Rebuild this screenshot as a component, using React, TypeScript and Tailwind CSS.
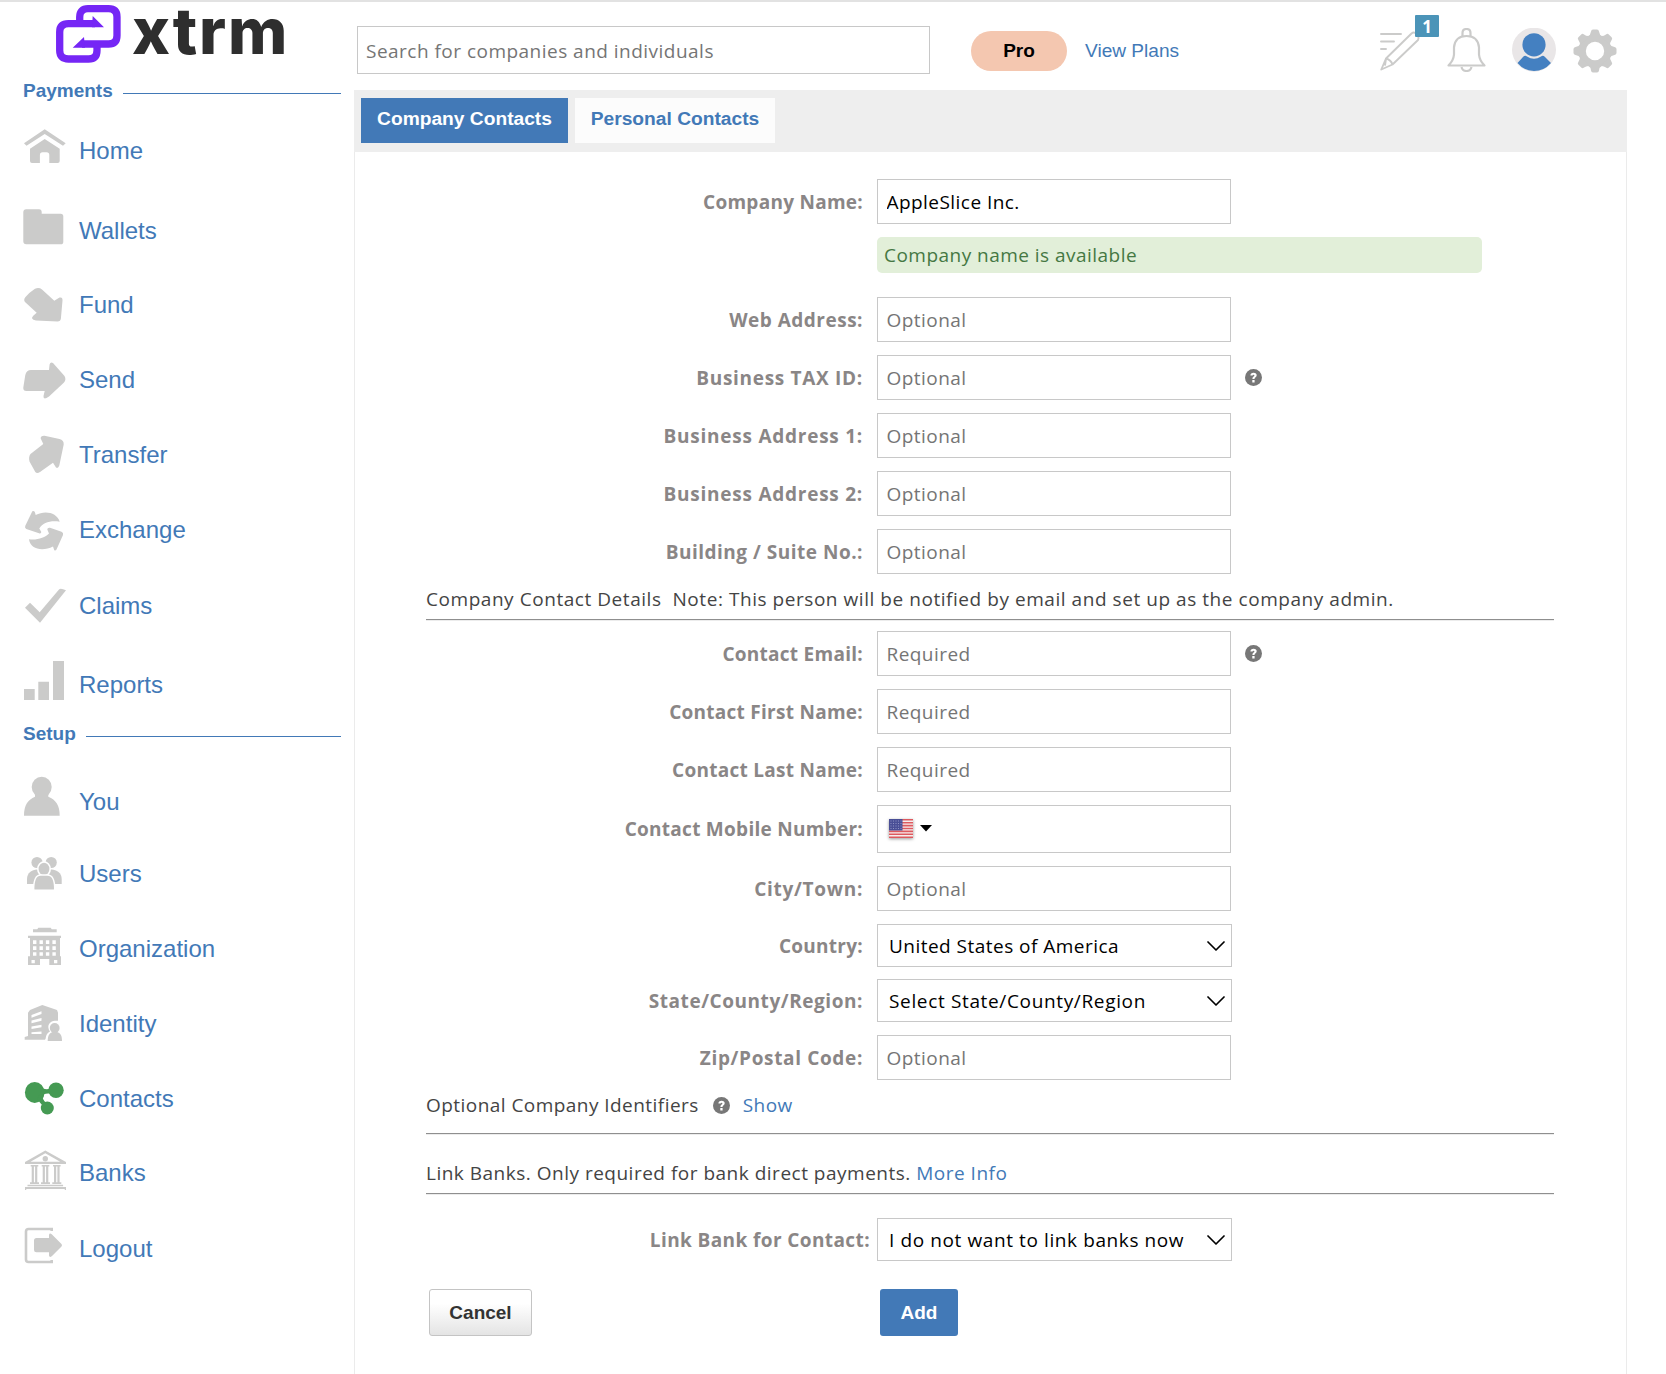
import type { ReactNode } from "react";

type NavItem = {
  label: string;
  gap: string;
  icon: ReactNode;
};

const paymentItems: NavItem[] = [
  {
    label: "Home",
    gap: "mt-0",
    icon: (
      <>
        <path d="M21.7.3 42.7 14.3 40 16.7 21.7 5 3.5 16.7 1 14.3z" />
        <path d="M21.7 10 36.7 19.7V32q0 2-2 2h-8.400v-8q0-2.700-2.700-2.700h-4q-2.700 0-2.700 2.700v8H9q-2 0-2-2V19.700z" />
      </>
    ),
  },
  {
    label: "Wallets",
    gap: "mt-[36px]",
    icon: <path d="M3.3.3H16q2.7 0 2.7 3v1.4h19q2.6 0 2.6 2.6v25.4q0 2.6-2.6 2.6H3.3q-3 0-3-3V3.3q0-3 3-3z" />,
  },
  {
    label: "Fund",
    gap: "mt-[30px]",
    icon: (
      <path d="M19 6.5 31.3 17.7 36.5 14.6Q39.7 13.7 39.5 17.5L37.9 35.5Q37.6 38.4 34.5 38.4L13 37.5Q6.5 36 10.5 32.5L13.7 29.7 2 19Q.3 17 2.3 14.3 6 9.5 12 5.7 16 4 19 6.5z" />
    ),
  },
  {
    label: "Send",
    gap: "mt-[31px]",
    icon: (
      <path d="M26 12 26.6 6.5Q27.5 3.5 30 5L41.5 18Q43.5 21.5 41 24.5L26 38.5Q20 42.5 20.5 38L21.7 33H3.5Q0 33 .3 29.5L2.3 17Q3.5 12 8 12z" />
    ),
  },
  {
    label: "Transfer",
    gap: "mt-[31px]",
    icon: (
      <path d="M20.3 11 17.7 5.5Q17.5 2.5 21.5 2.7L36.5 5.9Q41 7 40.7 11.5L36.3 32.5Q35 36 33 34.5L30 29.7 17 39Q14 41 12.3 39L6.5 28.5Q5.3 24 7.5 21z" />
    ),
  },
  {
    label: "Exchange",
    gap: "mt-[31px]",
    icon: (
      <>
        <path d="M9.3 3.3Q11.5 2.3 12 4.5L12.7 7C22 2 34 4.5 36.7 13.7 27 12.5 20 14.5 16.3 20.5L18.3 24Q18 26 16 25.2L3.3 21Q1.5 20 2.2 18z" />
        <path d="M6 31.3C14 32.5 22 29.5 26 25.5L24.3 21.5Q24.3 19.3 27 19.7L38.5 23.7Q40.7 24.5 40 27L33.5 41.5Q32.3 43.3 31.2 42L30 38.5C20 43.5 7 41.5 6 31.3z" />
      </>
    ),
  },
  {
    label: "Claims",
    gap: "mt-[32px]",
    icon: <path d="M2 23.7 7 18.7 16.7 28.3 36 5.5Q37.5 3.7 43 6.3L17 38.7z" />,
  },
  {
    label: "Reports",
    gap: "mt-[35px]",
    icon: <path d="M1 26h10.700v11H1zM15.300 18.700H26V37H15.300zM30-2h11v39H30z" />,
  },
];

const setupItems: NavItem[] = [
  {
    label: "You",
    gap: "mt-0",
    icon: (
      <>
        <ellipse cx="18.7" cy="7" rx="10" ry="10.2" />
        <path d="M12 14h13.3v2.7C33 20 36.7 25 36.7 35.7H1C1 25 5 19.5 12 16.7z" />
      </>
    ),
  },
  {
    label: "Users",
    gap: "mt-[28px]",
    icon: (
      <>
        <circle cx="14" cy="10.5" r="5.6" />
        <circle cx="28.2" cy="10.5" r="5.6" />
        <path d="M4 32v-5c0-6 5-9.5 10-9.5h14.5c5 0 10.2 3.5 10.2 9.5v5z" />
        <ellipse cx="21" cy="17" rx="6.2" ry="7" stroke="#fff" strokeWidth="1.6" />
        <path
          d="M10.700 37c0-9 2.500-14 7-14h6.800c4.500 0 7.200 5 7.200 14q0 1.300-1.300 1.300H12q-1.300 0-1.300-1.300z"
          stroke="#fff"
          strokeWidth="1.4"
        />
      </>
    ),
  },
  {
    label: "Organization",
    gap: "mt-[31px]",
    icon: (
      <>
        <path d="M15.3.7h12.4l1 1.6h5v3H10v-3h4.3zM5 8.7h33V11h-1v18.3h1V38H26.3v-6H17v6H5v-8.7h2V11H5z" />
        <path
          d="M10 13.300h3.400v3.800H10zm6.500 0h3.400v3.800h-3.400zm6.400 0h3.400v3.800h-3.400zm6.500 0h3.400v3.800h-3.400zM10 19.300h3.400V23H10zm6.500 0h3.400V23h-3.400zm6.400 0h3.400V23h-3.400zm6.500 0h3.400V23h-3.400zM10 25.200h3.400v3.500H10zm6.500 0h3.400v3.500h-3.400zm6.400 0h3.400v3.500h-3.400zm6.500 0h3.400v3.500h-3.400zM8.500 33h3.300v3.300H8.500zm22.500 0h3.300v3.300H31z"
          fill="#fff"
        />
      </>
    ),
  },
  {
    label: "Identity",
    gap: "mt-[31px]",
    icon: (
      <>
        <path d="M5 10.7 7 8 19.3 3 34 8l1 2.7v11L22 37.7H1.7V35L5 34z" />
        <path
          d="M8.5 13 18.5 9.3V12L8.5 15.7zM8.5 18.6l10-2.6v2.7l-10 2.5zM8.5 24.5l10-1.7v2.5l-10 1.6zM8.5 30.3l10-.8v2.6h-10z"
          fill="#fff"
        />
        <path d="M22.500 40c0-7 2-9.500 4.500-10.200-4.500-7 1-11 4.700-11h4V40z" fill="#fff" />
        <circle cx="31.7" cy="26" r="4.9" />
        <path d="M24.7 39c0-6 2-8 4.8-9h4.7c3 1 4.8 3 4.8 9z" />
      </>
    ),
  },
  {
    label: "Contacts",
    gap: "mt-[31px]",
    icon: (
      <g fill="#459a53">
        <ellipse cx="11.7" cy="15.4" rx="9.8" ry="10.5" />
        <circle cx="33" cy="13.2" r="7.7" />
        <circle cx="24.3" cy="31" r="6.5" />
        <path d="M20 11.5q4 1.5 7 0v5q-7-.5-7.5 2.5-.3 3 3.5 7l-4 2-5-6z" />
      </g>
    ),
  },
  {
    label: "Banks",
    gap: "mt-[30px]",
    icon: (
      <>
        <path d="M22.3-.5 43 11v2H2v-2zm0 2.8L7.5 10.7h29.7z" fillRule="evenodd" />
        <circle cx="22.3" cy="7.7" r="2.7" />
        <path d="M7.700 14h7.600v1.600H7.700zM8.700 15.600h2.200v15.600H8.700zm3.400 0h2.200v15.600h-2.200zM7 31.200h9v1.900H7zM18.700 14h7.600v1.600h-7.600zm1 1.600h2.200v15.600h-2.200zm3.400 0h2.200v15.600h-2.200zM18 31.200h9v1.900h-9zM30 14h7.600v1.600H30zm1 1.600h2.200v15.600H31zm3.400 0h2.200v15.600h-2.200zM29.300 31.200h9v1.900h-9zM4.500 33.700h35.600v1.600H4.500zM2 36h41v3h-1l-.5-1h-38L3 39H2z" />
      </>
    ),
  },
  {
    label: "Logout",
    gap: "mt-[32px]",
    icon: (
      <>
        <path
          d="M28.7 4V2H5.5Q3 2 3 4.5v28Q3 35 5.5 35h23.2v-2"
          fill="none"
          stroke="#cbcbca"
          strokeWidth="2.6"
        />
        <path d="M13.5 11H26V8q.5-2.5 3-.5L38.5 17q1 1.3 0 2.6L29 29q-2.500 2-3-.5v-3.200H13.500Q11 25.300 11 23v-9.500Q11 11 13.500 11z" />
      </>
    ),
  },
];

function NavList({ items }: { items: NavItem[] }) {
  return (
    <ul>
      {items.map((item) => (
        <li key={item.label} className={item.gap}>
          <a href="#" className="flex h-11 items-center text-2xl text-[#4279b7]">
            <svg viewBox="0 0 44 44" className="h-11 w-11 overflow-visible" fill="#cbcbca">
              {item.icon}
            </svg>
            <span className="ml-3">{item.label}</span>
          </a>
        </li>
      ))}
    </ul>
  );
}

function NavHeading({ children }: { children: ReactNode }) {
  return (
    <div className="flex items-center text-[19px] leading-6 font-bold text-[#4279b7]">
      {children}
      <span className="mt-[5px] ml-[10px] h-px flex-1 bg-[#4279b7]" />
    </div>
  );
}

function Logo() {
  return (
    <div className="flex h-[70px] items-start pl-[33px]">
      <svg viewBox="0 0 65 58" className="mt-[3px] h-[58px] w-[65px]" fill="none" stroke="#7526f5" strokeWidth="7.3">
        <path d="M23.700 16V12Q23.700 3.700 32 3.700H52.500Q61 3.700 61 12V30.500Q61 39 52.500 39H26" />
        <path d="M41 42V45.500Q41 54 32.500 54H12.500Q3.700 54 3.700 45.500V27Q3.700 18.700 12.500 18.700H39" />
        <path d="M36.700 11 48 22.300H36zM28 32 16.700 42.700H29z" fill="#7526f5" stroke="none" />
      </svg>
      <span className="ml-[11px] font-[Inter,sans-serif] text-[64px] leading-[58px] font-extrabold tracking-[1.900px] text-[#2e2e2e]">
        xtrm
      </span>
    </div>
  );
}

function Sidebar() {
  return (
    <aside className="w-[354px] shrink-0 pl-[23px]">
      <Logo />
      <div className="mt-[7px] w-[318px]">
        <NavHeading>Payments</NavHeading>
      </div>
      <nav className="mt-[26px]">
        <NavList items={paymentItems} />
      </nav>
      <div className="mt-[15px] w-[318px]">
        <NavHeading>Setup</NavHeading>
      </div>
      <nav className="mt-[34px]">
        <NavList items={setupItems} />
      </nav>
    </aside>
  );
}

function TopBar() {
  return (
    <header className="flex h-[88px] items-start pl-[3px]">
      <input
        placeholder="Search for companies and individuals"
        className="mt-[24px] h-[48px] w-[573px] border border-[#c8c8c8] px-2 pt-px font-['Open_Sans',sans-serif] text-[19px] tracking-[0.48px] placeholder:text-[#757575]"
      />
      <span className="mt-[29px] ml-[41px] flex h-10 w-24 items-center justify-center rounded-[20px] bg-[#f4c7b0] pt-px text-[19px] font-bold text-black">
        Pro
      </span>
      <a href="#" className="mt-[37px] ml-[18px] w-[95px] text-[19.1px] leading-6 whitespace-nowrap text-[#4279b7]">
        View Plans
      </a>
      <div className="relative mt-[30px] ml-[200px] h-10 w-10">
        <svg viewBox="0 0 40 40" className="h-10 w-10 overflow-visible" fill="none" stroke="#cbcbca" strokeWidth="1.9">
          <path d="M1 2h20M1 9.5h13M1 17h5" strokeLinecap="round" />
          <path d="M1.3 37.5 6 26.5 31.5 1.5Q34-.5 36.500 2 39.500 5 38 8L12.500 32.500zM6 26.500q5 1.500 6.500 6M6 26.500l-1 7" strokeLinejoin="round" />
        </svg>
        <span className="absolute -top-[17px] left-[35px] flex h-[22px] w-6 items-center justify-center rounded-[1px] bg-[#4b94b8] font-['Noto_Sans',sans-serif] text-[17px] leading-none font-bold text-white">
          1
        </span>
      </div>
      <svg viewBox="0 0 40 44" className="mt-[26px] ml-[27px] h-11 w-10" fill="none" stroke="#cbcbca" strokeWidth="2.2">
        <path d="M15.5 8V5q0-4 4-4t4 4v3M14.5 39q1 4 5 4t5-4" />
        <path d="M1.5 37.5q5-5 5.5-11v-7Q8 8 19.500 8T32 19.500v7q.5 6 5.500 11z" strokeLinejoin="round" />
      </svg>
      <svg viewBox="0 0 44 44" className="mt-[26px] ml-[25px] h-11 w-11">
        <circle cx="22" cy="21.7" r="22" fill="#e9e6e7" />
        <circle cx="22" cy="16.8" r="11.6" fill="#4480c1" />
        <path d="M5.5 35 11 29q2-2 4-.5 7 4.500 14 0 2-1.500 4 .5l6 6Q32 43 22 43T5.500 35z" fill="#4480c1" />
      </svg>
      <svg viewBox="-22 -22 44 44" className="mt-[27px] ml-[17px] h-11 w-11" fill="#cbcbca">
        <path
          fillRule="evenodd"
          d="M0-16.5A16.5 16.5 0 1 1 0 16.5 16.5 16.5 0 1 1 0-16.5zM0-9.2A9.2 9.2 0 1 0 0 9.2 9.2 9.2 0 1 0 0-9.2z"
        />
        {[0, 45, 90, 135, 180, 225, 270, 315].map((angle) => (
          <path
            key={angle}
            d="M-7-14.5Q-4.5-16-4-19.5-3.7-21.5-2-21.5H2Q3.7-21.5 4-19.5 4.5-16 7-14.5z"
            transform={`rotate(${angle})`}
          />
        ))}
      </svg>
    </header>
  );
}

function Help({ className = "" }: { className?: string }) {
  return (
    <svg viewBox="0 0 17 17" className={`h-[17px] w-[17px] ${className}`}>
      <circle cx="8.5" cy="8.5" r="8.5" fill="#777" />
      <path
        d="M5.4 6.5Q5.5 3.7 8.6 3.7T11.7 6.3Q11.7 7.6 10.3 8.4 9.5 9 9.5 10H7.4Q7.3 8.3 8.6 7.5 9.4 7 9.4 6.4 9.4 5.7 8.6 5.7T7.6 6.5zM7.3 11.1h2.3v2.3H7.3z"
        fill="#fff"
      />
    </svg>
  );
}

type RowProps = {
  label: string;
  tracking?: string;
  className?: string;
  wide?: boolean;
  help?: boolean;
  children: ReactNode;
};

function Row({ label, tracking = "tracking-[0.27px]", className = "mt-[13px]", wide, help, children }: RowProps) {
  return (
    <div className={`flex items-center ${className}`}>
      <span
        className={`shrink-0 text-right font-bold text-[#8a8686] ${tracking} ${wide ? "mr-[7px] w-[515px]" : "mr-[14px] w-[508px]"}`}
      >
        {label}
      </span>
      {children}
      {help && <Help className="ml-[14px]" />}
    </div>
  );
}

function TextBox({ placeholder, value }: { placeholder?: string; value?: string }) {
  return (
    <input
      placeholder={placeholder}
      defaultValue={value}
      className="h-[45px] w-[354px] border border-[#c8c8c8] px-[8.5px] tracking-[0.45px] text-black placeholder:text-[#757575]"
    />
  );
}

function SelectBox({ value, tracking }: { value: string; tracking: string }) {
  return (
    <button
      className={`flex h-[43px] w-[355px] items-center justify-between border border-[#c8c8c8] pr-[6px] pl-[11px] text-black ${tracking}`}
    >
      {value}
      <svg viewBox="0 0 18 10" className="h-[10px] w-[18px]" fill="none" stroke="#000" strokeWidth="1.7">
        <path d="M1 1 9 9 17 1" strokeLinecap="round" strokeLinejoin="round" />
      </svg>
    </button>
  );
}

function Flag() {
  return (
    <svg viewBox="0 0 24 19" className="h-[19px] w-6 shadow-[0_1px_3px_rgba(0,0,0,0.4)]">
      <rect width="24" height="19" fill="#f6eeee" />
      <path
        d="M0 .8h24M0 3.7h24M0 6.6h24M0 9.5h24M0 12.4h24M0 15.3h24M0 18.2h24"
        stroke="#dd5a5f"
        strokeWidth="1.6"
      />
      <rect width="13.5" height="11.5" fill="#4a4f96" />
      <path
        d="M1.5 2h11M1.5 4.5h11M1.5 7h11M1.5 9.5h11"
        stroke="#8f93c4"
        strokeWidth="1"
        strokeDasharray="1 1.5"
      />
    </svg>
  );
}

function Rule({ className }: { className: string }) {
  return <hr className={`ml-[71px] h-[2px] w-[1128px] border-0 border-t border-[#8f8f8f] bg-[#ececec] ${className}`} />;
}

function ContactForm() {
  return (
    <form className="h-[1222px] border-x border-[#ebebeb] pt-[27px] font-['Open_Sans',sans-serif] text-[19px] leading-6 text-[#444]">
      <Row label="Company Name:" className="mt-0">
        <TextBox value="AppleSlice Inc." />
      </Row>
      <p className="mt-[13px] ml-[522px] h-9 w-[605px] rounded-[5px] bg-[#e2efd9] pl-[7px] leading-9 tracking-[0.47px] text-[#457843]">
        Company name is available
      </p>
      <Row label="Web Address:" tracking="tracking-[0.5px]" className="mt-[24px]">
        <TextBox placeholder="Optional" />
      </Row>
      <Row label="Business TAX ID:" tracking="tracking-[0.7px]" help>
        <TextBox placeholder="Optional" />
      </Row>
      <Row label="Business Address 1:" tracking="tracking-[0.75px]">
        <TextBox placeholder="Optional" />
      </Row>
      <Row label="Business Address 2:" tracking="tracking-[0.75px]">
        <TextBox placeholder="Optional" />
      </Row>
      <Row label="Building / Suite No.:" tracking="tracking-[0.5px]">
        <TextBox placeholder="Optional" />
      </Row>
      <p className="mt-[13px] ml-[71px] whitespace-pre tracking-[0.55px]">
        {"Company Contact Details  Note: This person will be notified by email and set up as the company admin."}
      </p>
      <Rule className="mt-[8px]" />
      <Row label="Contact Email:" className="mt-[10px]" help>
        <TextBox placeholder="Required" />
      </Row>
      <Row label="Contact First Name:">
        <TextBox placeholder="Required" />
      </Row>
      <Row label="Contact Last Name:">
        <TextBox placeholder="Required" />
      </Row>
      <Row label="Contact Mobile Number:">
        <div className="flex h-[48px] w-[354px] items-center border border-[#c8c8c8] pb-[2px] pl-[11px]">
          <Flag />
          <svg viewBox="0 0 12 7" className="ml-[7px] h-[7px] w-3">
            <path d="M0 0h12L6 6.5z" />
          </svg>
        </div>
      </Row>
      <Row label="City/Town:" tracking="tracking-[0.7px]">
        <TextBox placeholder="Optional" />
      </Row>
      <Row label="Country:">
        <SelectBox value="United States of America" tracking="tracking-[0.47px]" />
      </Row>
      <Row label="State/County/Region:" tracking="tracking-[0.55px]" className="mt-[12px]">
        <SelectBox value="Select State/County/Region" tracking="tracking-[0.65px]" />
      </Row>
      <Row label="Zip/Postal Code:" tracking="tracking-[0.65px]">
        <TextBox placeholder="Optional" />
      </Row>
      <p className="mt-[13px] ml-[71px] flex items-center tracking-[0.45px]">
        Optional Company Identifiers
        <Help className="ml-[14px]" />
        <a href="#" className="ml-[13px] text-[#4279b7]">
          Show
        </a>
      </p>
      <Rule className="mt-[16px]" />
      <p className="mt-[26px] ml-[71px] tracking-[0.5px]">
        Link Banks. Only required for bank direct payments.{" "}
        <a href="#" className="text-[#4279b7]">
          More Info
        </a>
      </p>
      <Rule className="mt-[8px]" />
      <Row label="Link Bank for Contact:" tracking="tracking-[0.4px]" className="mt-[23px]" wide>
        <SelectBox value="I do not want to link banks now" tracking="tracking-[0.6px]" />
      </Row>
      <div className="mt-[28px] flex pl-[74px] font-['Liberation_Sans',sans-serif] font-bold [text-shadow:0_1px_1px_rgba(0,0,0,0.3)]">
        <button className="h-[47px] w-[103px] rounded-[3px] border border-[#c4c4c4] bg-linear-to-b from-white from-30% to-[#e4e4e4] text-[#333]">
          Cancel
        </button>
        <button className="ml-[348px] h-[47px] w-[78px] rounded-[3px] bg-[#4279b7] text-white">Add</button>
      </div>
    </form>
  );
}

export default function App() {
  return (
    <div className="flex h-[1374px] w-[1666px] overflow-hidden border-t-2 border-[#e2e2e2] bg-white font-['Liberation_Sans',Arial,sans-serif]">
      <Sidebar />
      <main className="w-[1273px] shrink-0">
        <TopBar />
        <div className="flex h-[62px] bg-[#eee] pt-2 pl-[7px] text-[19.2px] font-bold">
          <button className="h-[45px] w-[207px] bg-[#4279b7] pb-[2px] text-white">Company Contacts</button>
          <button className="ml-[7px] h-[45px] w-[200px] bg-[#fcfcfc] pb-[2px] text-[#4279b7]">Personal Contacts</button>
        </div>
        <ContactForm />
      </main>
    </div>
  );
}
